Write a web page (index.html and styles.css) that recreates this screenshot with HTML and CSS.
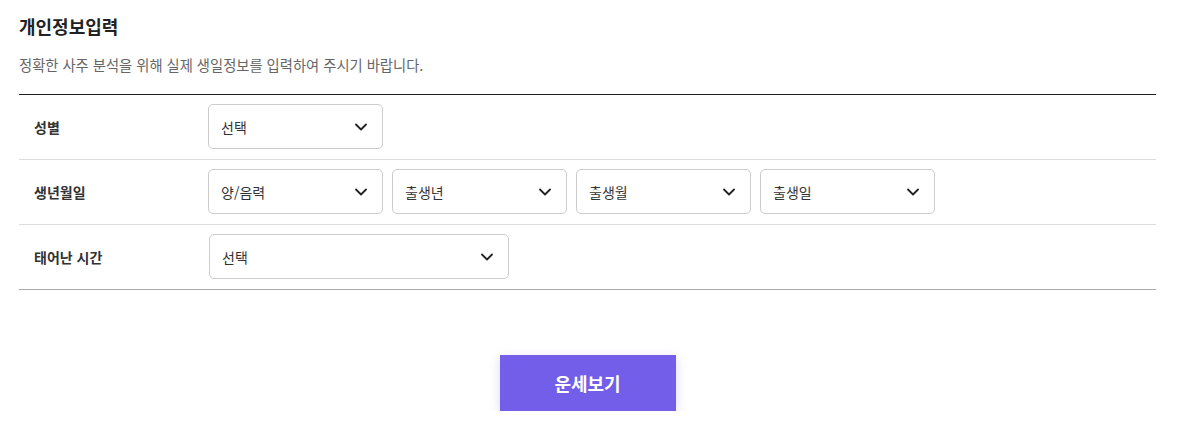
FILE: index.html
```html
<!DOCTYPE html>
<html lang="ko">
<head>
<meta charset="utf-8">
<title>개인정보입력</title>
<link rel="stylesheet" href="styles.css">
</head>
<body>
<div class="page">
  <h2 class="title">개인정보입력</h2>
  <p class="desc">정확한 사주 분석을 위해 실제 생일정보를 입력하여 주시기 바랍니다.</p>
  <div class="form">
    <div class="row">
      <div class="label">성별</div>
      <div class="fields">
        <div class="select"><span>선택</span><svg class="chev" viewBox="0 0 12 8"><path d="M1 1.5 L6 6.5 L11 1.5"/></svg></div>
      </div>
    </div>
    <div class="row">
      <div class="label">생년월일</div>
      <div class="fields">
        <div class="select"><span>양/음력</span><svg class="chev" viewBox="0 0 12 8"><path d="M1 1.5 L6 6.5 L11 1.5"/></svg></div>
        <div class="select"><span>출생년</span><svg class="chev" viewBox="0 0 12 8"><path d="M1 1.5 L6 6.5 L11 1.5"/></svg></div>
        <div class="select"><span>출생월</span><svg class="chev" viewBox="0 0 12 8"><path d="M1 1.5 L6 6.5 L11 1.5"/></svg></div>
        <div class="select"><span>출생일</span><svg class="chev" viewBox="0 0 12 8"><path d="M1 1.5 L6 6.5 L11 1.5"/></svg></div>
      </div>
    </div>
    <div class="row last">
      <div class="label">태어난 시간</div>
      <div class="fields shift">
        <div class="select wide"><span>선택</span><svg class="chev" viewBox="0 0 12 8"><path d="M1 1.5 L6 6.5 L11 1.5"/></svg></div>
      </div>
    </div>
  </div>
  <div class="actions">
    <button class="btn" type="button">운세보기</button>
  </div>
</div>
</body>
</html>
```
FILE: styles.css
```css
* { box-sizing: border-box; }
html, body { margin: 0; padding: 0; background: #fff; }
body {
  font-family: "Noto Sans CJK KR", "Noto Sans", sans-serif;
  color: #222;
}
.page {
  padding: 14px 21px 0 19px;
}
.title {
  margin: 0;
  font-size: 18px;
  line-height: 25px;
  font-weight: 700;
  color: #222;
}
.desc {
  margin: 16px 0 0;
  font-size: 14.3px;
  line-height: 20px;
  color: #666;
}
.form {
  margin-top: 19px;
  border-top: 1px solid #222;
}
.row {
  display: flex;
  align-items: center;
  padding: 9px 0 10px;
  border-bottom: 1px solid #ddd;
}
.row.last { border-bottom-color: #aaa; }
.label {
  width: 189px;
  padding-left: 15px;
  font-size: 14px;
  font-weight: 700;
  color: #333;
}
.fields {
  display: flex;
  gap: 9px;
}
.fields.shift { margin-left: 1px; }
.select {
  width: 175px;
  height: 45px;
  border: 1px solid #ccc;
  border-radius: 5px;
  display: flex;
  align-items: center;
  justify-content: space-between;
  padding: 0 15px 0 12px;
  font-size: 14px;
  color: #333;
  background: #fff;
}
.select.wide { width: 300px; }
.chev {
  width: 12px;
  height: 8px;
  fill: none;
  stroke: #222;
  stroke-width: 1.8;
  stroke-linecap: round;
  stroke-linejoin: round;
}
.actions {
  display: flex;
  justify-content: center;
  margin-top: 65px;
}
.btn {
  width: 176px;
  height: 56px;
  border: 0;
  background: #725ee9;
  color: #fff;
  font-family: "Noto Sans CJK KR", "Noto Sans", sans-serif;
  font-size: 18px;
  font-weight: 700;
  box-shadow: 0 3px 10px rgba(114, 94, 233, 0.25);
  cursor: pointer;
}
```
